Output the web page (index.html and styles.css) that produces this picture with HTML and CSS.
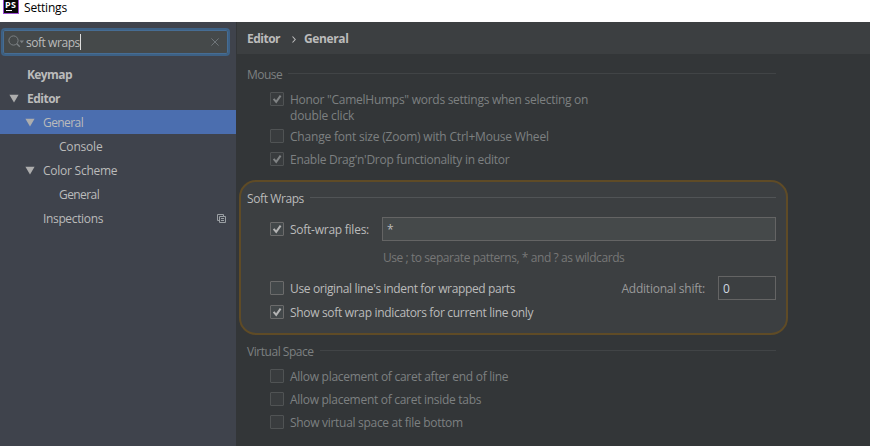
FILE: index.html
```html
<!DOCTYPE html>
<html lang="en">
<head>
<meta charset="utf-8">
<title>Settings</title>
<link rel="stylesheet" href="styles.css">
</head>
<body>
<svg class="defs" aria-hidden="true">
  <symbol id="tick" viewBox="0 0 14 14"><path d="M3.600 6.800 6.200 9.800 10.600 3.600" fill="none" stroke="currentColor" stroke-width="2"/></symbol>
  <symbol id="arrow" viewBox="0 0 10 9"><path d="M.4.8h9.2L5 8.600z" fill="currentColor"/></symbol>
</svg>
<header class="titlebar">
  <div class="logo"><span>PS</span><i></i></div>
  <span class="t-settings">Settings</span>
</header>
<div class="window">
  <aside class="sidebar">
    <div class="search">
      <svg class="lens" width="17" height="14" viewBox="0 0 17 14"><circle cx="5.500" cy="5.500" r="4.600" fill="none" stroke="#7b8083"/><path d="m8.800 8.800 3 3" stroke="#7b8083" stroke-width="1.3"/><path d="M11.500 5.500h4.500l-2.200 2.700z" fill="#7b8083"/></svg>
      <span class="t-query">soft wraps</span><i class="caret"></i>
      <svg class="clear" width="8" height="8" viewBox="0 0 8 8"><path d="m.4.4 7.200 7.200M7.600.4.4 7.600" stroke="#70767a"/></svg>
    </div>
    <nav class="tree">
      <div class="node l1 bold"><span class="t-keymap">Keymap</span></div>
      <div class="node l1 bold"><svg class="arrow"><use href="#arrow"/></svg><span class="t-editor">Editor</span></div>
      <div class="node l2 selected"><svg class="arrow"><use href="#arrow"/></svg><span class="t-general">General</span></div>
      <div class="node l3"><span class="t-console">Console</span></div>
      <div class="node l2"><svg class="arrow"><use href="#arrow"/></svg><span class="t-scheme">Color Scheme</span></div>
      <div class="node l3"><span class="t-general">General</span></div>
      <div class="node l2"><span class="t-inspections">Inspections</span><svg class="copy" width="9" height="9" viewBox="0 0 9 9"><path d="M2 6.500H.5v-6h6V2M2.500 2.500h6v6h-6zM4 4.500h3M4 6.500h3" fill="none" stroke="#9a9fa3"/></svg></div>
    </nav>
  </aside>
  <main class="content">
    <div class="crumbs"><span class="t-editor">Editor</span><svg width="4" height="7" viewBox="0 0 4 7"><path d="m.5.5 2.700 3-2.700 3" fill="none" stroke="#bbb" stroke-width="1.1"/></svg><span class="t-crumb">General</span></div>
    <section class="group dim mouse">
      <h2><span class="t-mouse">Mouse</span></h2>
      <div class="row"><span class="box"><svg><use href="#tick"/></svg></span><span class="label"><span class="t-honor">Honor "CamelHumps" words settings when selecting on</span><br><span class="t-double">double click</span></span></div>
      <div class="row gap4"><span class="box"></span><span class="label t-change">Change font size (Zoom) with Ctrl+Mouse Wheel</span></div>
      <div class="row gap6"><span class="box"><svg><use href="#tick"/></svg></span><span class="label t-enable">Enable Drag'n'Drop functionality in editor</span></div>
    </section>
    <section class="group panel">
      <h2><span class="t-soft">Soft Wraps</span></h2>
      <div class="row field"><span class="box"><svg><use href="#tick"/></svg></span><span class="label t-files">Soft-wrap files:</span><span class="input wide">*</span></div>
      <div class="hint"><span class="t-hint">Use ; to separate patterns, * and ? as wildcards</span></div>
      <div class="row field"><span class="box"></span><span class="label t-indent">Use original line's indent for wrapped parts</span><span class="label shift t-shift">Additional shift:</span><span class="input small">0</span></div>
      <div class="row last"><span class="box"><svg><use href="#tick"/></svg></span><span class="label t-show">Show soft wrap indicators for current line only</span></div>
    </section>
    <section class="group dim virtual">
      <h2><span class="t-virtual">Virtual Space</span></h2>
      <div class="row"><span class="box"></span><span class="label t-end">Allow placement of caret after end of line</span></div>
      <div class="row gap6"><span class="box"></span><span class="label t-tabs">Allow placement of caret inside tabs</span></div>
      <div class="row gap6"><span class="box"></span><span class="label t-bottom">Show virtual space at file bottom</span></div>
    </section>
  </main>
</div>
</body>
</html>
```
FILE: styles.css
```css
* { box-sizing: border-box; }
body { margin: 0; width: 870px; height: 446px; overflow: hidden; background: #333638; color: #bbb; font: 12px/16px "Open Sans", "Noto Sans", sans-serif; white-space: nowrap; }
.defs { display: none; }
.titlebar { height: 22px; background: #fff; color: #000; display: flex; padding-left: 3px; }
.titlebar > span { margin-left: 5px; line-height: 15px; }
.logo { width: 16px; height: 14px; background: #080808; border: 1px solid #9a4fd0; border-top: 0; color: #fff; font: bold 9px/9px "Open Sans", sans-serif; padding-left: 1px; }
.logo span { display: block; height: 10px; letter-spacing: .4px; }
.logo i { display: block; width: 6px; height: 1px; margin-left: 1px; background: #fff; }
.window { display: flex; height: 424px; }
.sidebar { width: 237px; background: #3f434c; border-right: 1px solid #333638; padding-top: 6px; }
.search { height: 28px; width: 229px; margin-left: 1px; border: 2px solid #3d6185; border-radius: 4px; background: #45494a; box-shadow: inset 0 0 0 1px #466d94; display: flex; align-items: center; padding-left: 5px; }
.t-query { padding-top: 2px; }
.lens { margin-right: 1px; }
.caret { width: 1px; height: 16px; background: #ddd; }
.clear { margin-left: auto; margin-right: 9px; }
.tree { padding-top: 6px; }
.node { height: 24px; display: flex; align-items: center; color: #bbb; }
.node span { padding-top: 1px; }
.l1 { padding-left: 27px; }
.l2 { padding-left: 43px; }
.l3 { padding-left: 59px; }
.bold, .crumbs { font-weight: bold; }
.selected { background: #4b6eaf; }
.arrow { width: 10px; height: 9px; margin-left: -18px; margin-right: 8px; color: #adadad; }
.copy { margin-left: auto; margin-right: 10px; }
.content { flex: 1; }
.crumbs { height: 32px; background: #3c3f41; padding: 2px 0 0 10px; display: flex; align-items: center; }
.crumbs svg { margin: 0 8px 0 12px; }
.group { padding: 0 0 0 10px; width: 539px; }
.group h2 { margin: 0; font: inherit; display: flex; align-items: center; height: 16px; }
.group h2 span { padding-top: 1px; }
.group h2::after { content: ""; flex: 1; height: 1px; margin: 0 0 1px 6px; background: #515456; }
.dim { color: #7d8081; }
.dim h2::after { background: #414446; }
.mouse { padding-top: 12px; height: 126px; }
.mouse h2 { margin-bottom: 9px; }
.row { display: flex; padding-left: 23px; min-height: 17px; }
.label { padding-top: 1px; }
.gap4 { margin-top: 4px; }
.gap6 { margin-top: 6px; }
.box { width: 14px; height: 14px; flex: none; margin: 1px 6px 0 0; border: 1px solid #6b6b6b; border-radius: 1px; background: #43484a; color: #b4b4b4; }
.box svg { width: 14px; height: 14px; display: block; margin: -1px; }
.dim .box { background: #393c3e; border-color: #505354; color: #808384; }
.panel { width: 549px; height: 155px; margin-left: 2px; background: #3c3f41; border: 2px solid #5f4b26; border-radius: 17px; padding: 8px 10px 0 6px; }
.field { height: 24px; align-items: center; }
.field .box { margin-top: 0; }
.field .label { padding-top: 2px; }
.panel h2 + .field { margin-top: 11px; }
.input { height: 24px; border: 1px solid #646464; line-height: 23px; padding-left: 4px; }
.wide { width: 394px; margin-left: auto; background: #45494a; }
.small { width: 58px; margin-left: 13px; color: #d0d8e0; }
.shift { margin-left: auto; color: #999; }
.hint { margin: 9px 0 10px; padding-left: 136px; color: #777; }
.last { margin-top: 4px; }
.virtual { padding-top: 8px; }
.virtual h2 { margin-bottom: 9px; }

/* Tracking of the condensed interface text */
.t-settings { letter-spacing: -.2px; }
.t-query { letter-spacing: -.45px; }
.t-keymap { letter-spacing: -.6px; }
.t-editor { letter-spacing: -.5px; }
.t-general { letter-spacing: -.57px; }
.t-console { letter-spacing: -.2px; }
.t-scheme { letter-spacing: -.25px; }
.t-inspections { letter-spacing: -.35px; }
.t-crumb { letter-spacing: -.4px; }
.t-mouse { letter-spacing: -.5px; }
.t-honor { letter-spacing: -.27px; }
.t-double { letter-spacing: -.15px; }
.t-change { letter-spacing: -.2px; }
.t-enable { letter-spacing: -.28px; }
.t-soft { letter-spacing: -.4px; }
.t-files { letter-spacing: -.25px; }
.t-hint { letter-spacing: -.43px; }
.t-indent { letter-spacing: -.36px; }
.t-shift { letter-spacing: -.24px; }
.t-show { letter-spacing: -.32px; }
.t-virtual { letter-spacing: -.46px; }
.t-end { letter-spacing: -.28px; }
.t-tabs { letter-spacing: -.29px; }
.t-bottom { letter-spacing: -.3px; }
```
